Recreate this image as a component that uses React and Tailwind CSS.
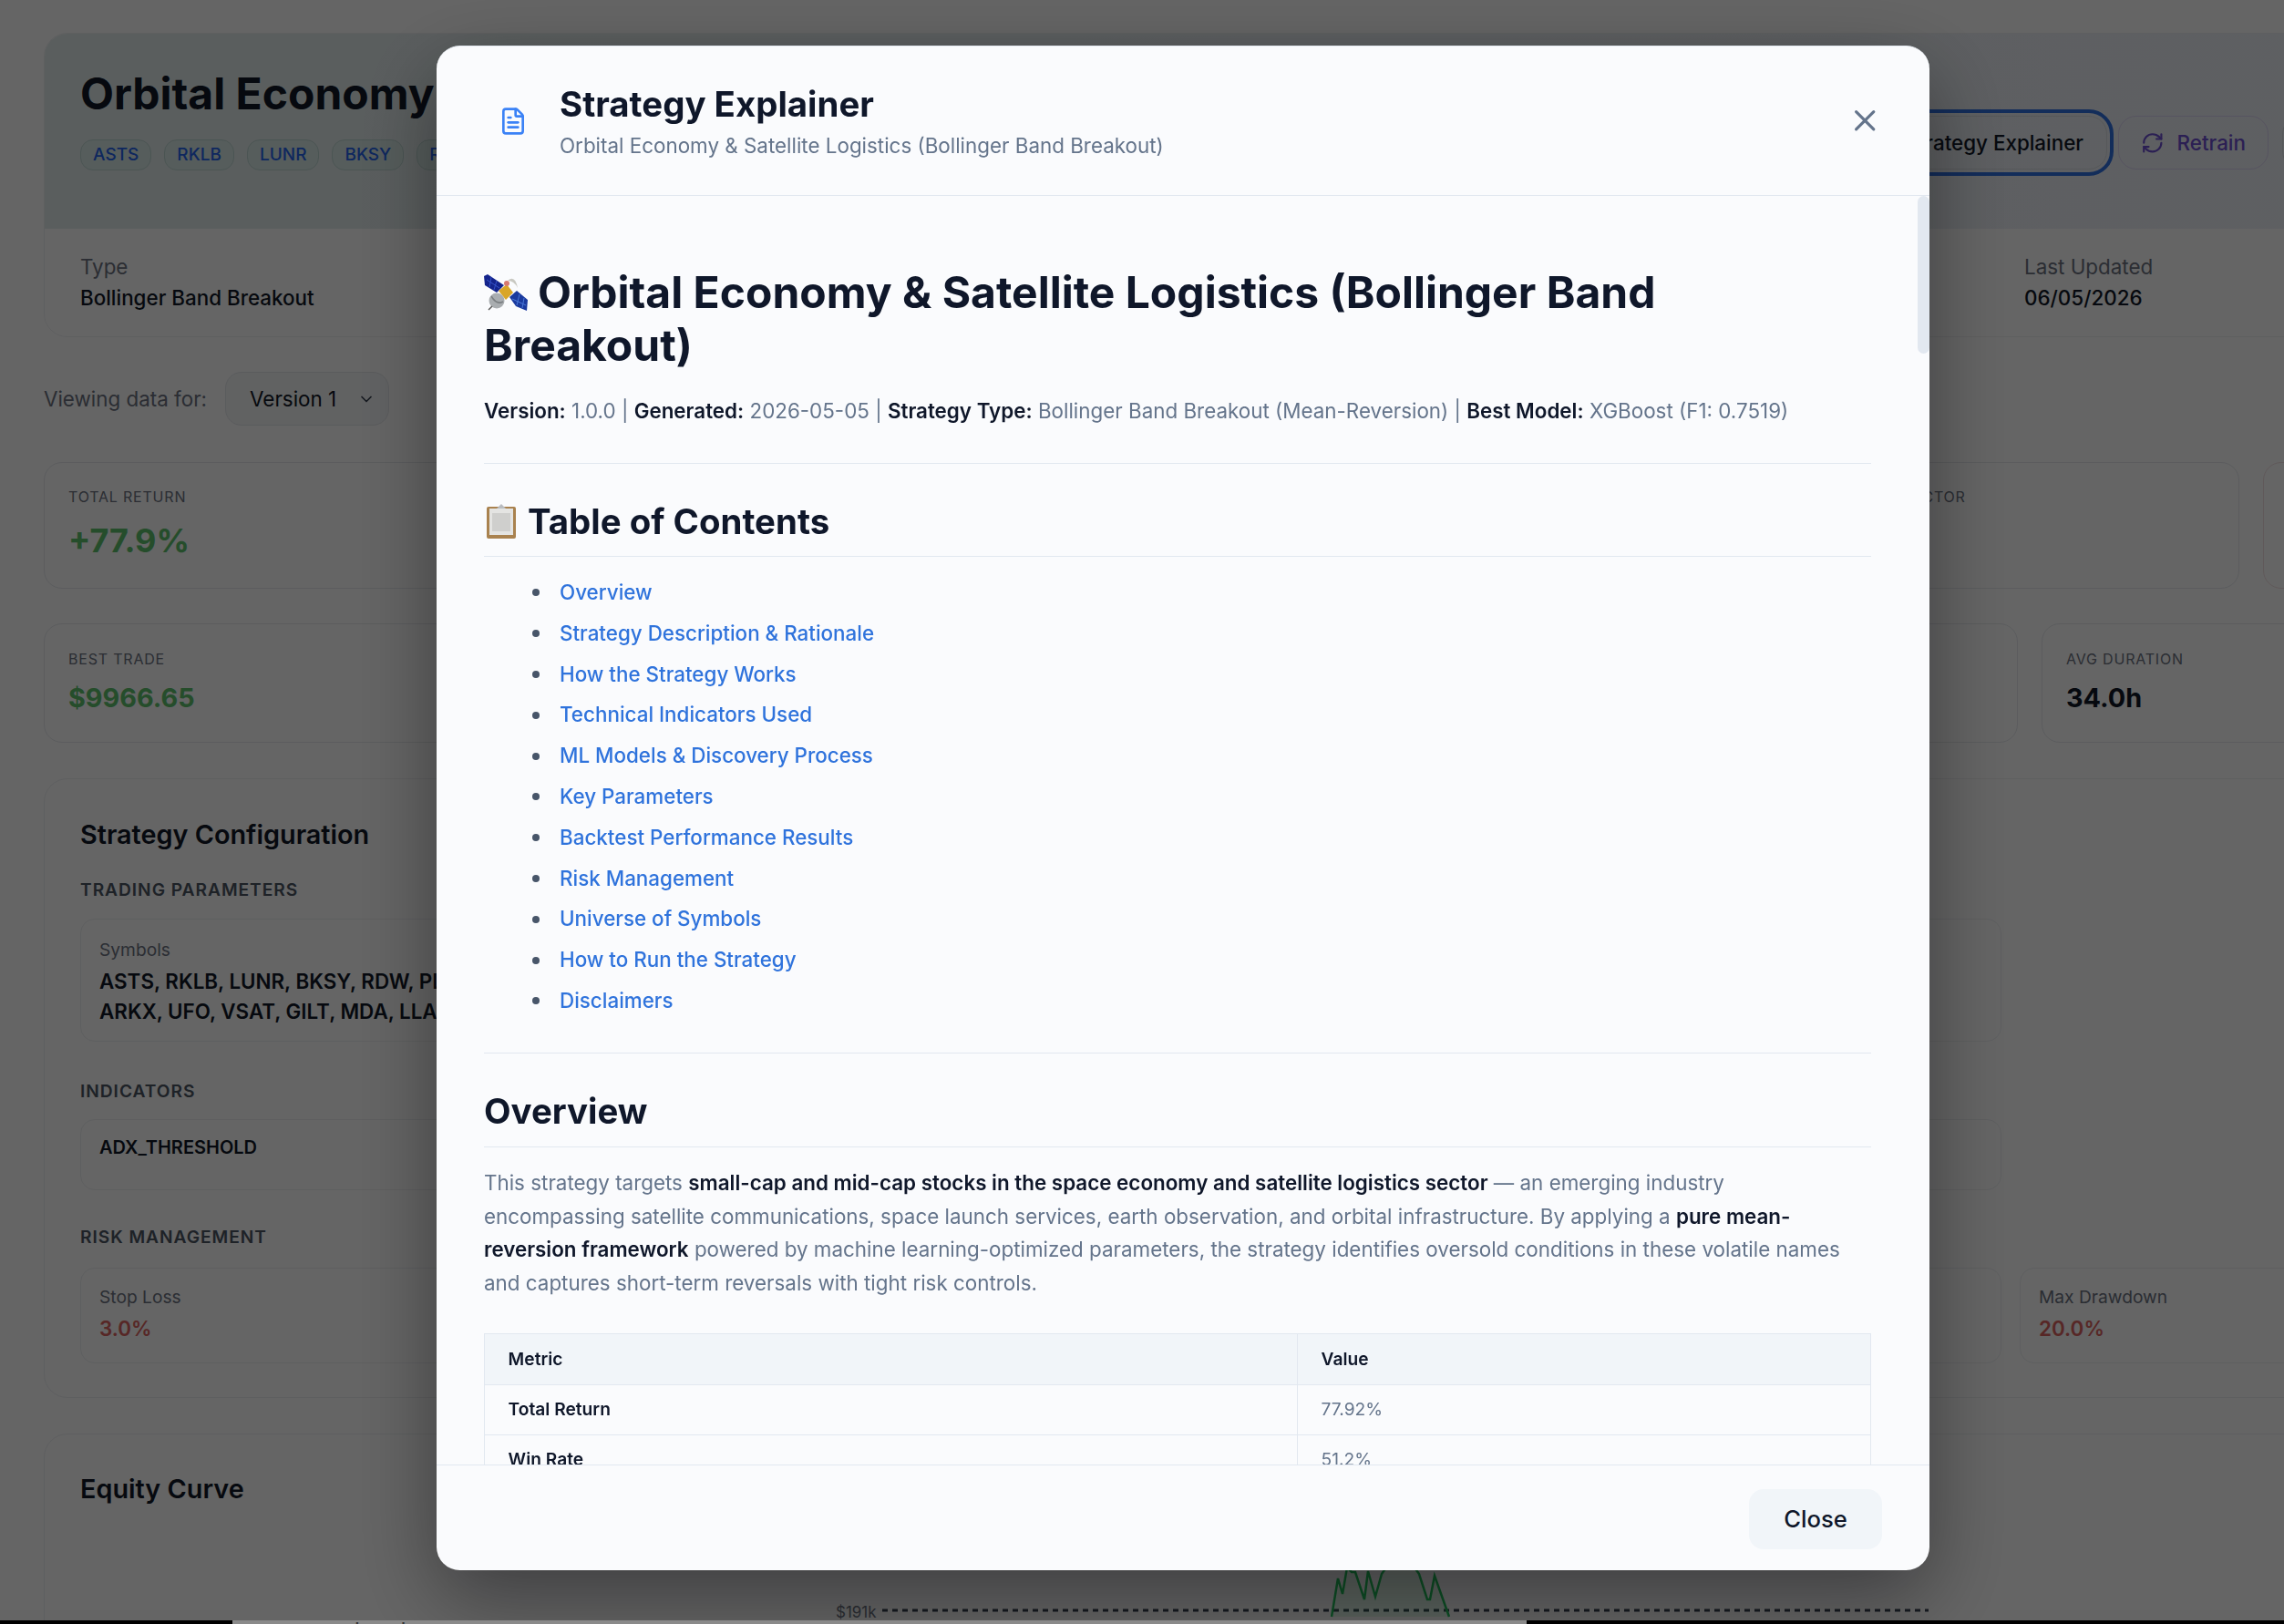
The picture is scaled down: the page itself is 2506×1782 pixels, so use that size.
import React from 'react';
import { ChevronDown, FileText, RefreshCw, X } from 'lucide-react';

const tocItems = [
  'Overview',
  'Strategy Description & Rationale',
  'How the Strategy Works',
  'Technical Indicators Used',
  'ML Models & Discovery Process',
  'Key Parameters',
  'Backtest Performance Results',
  'Risk Management',
  'Universe of Symbols',
  'How to Run the Strategy',
  'Disclaimers',
];

const symbols = ['ASTS', 'RKLB', 'LUNR', 'BKSY', 'RDW'];

const SatelliteEmoji = () => (
  <svg viewBox="0 0 48 40" className="inline-block w-[48px] h-[40px] align-[-3px] mr-[11px]">
    <path d="M0 2 L4 0 L22 12 L14 20 L1 12 Z" fill="#14248c" />
    <path d="M3 6 L17 15 M8 3 L6 14 M14 7 L11 17" stroke="#3552c9" strokeWidth="1" />
    <path d="M28 25 L36 18 L48 28 L47 40 L35 35 Z" fill="#1a3a9e" />
    <path d="M31 27 L46 34 M39 22 L36 34 M44 26 L42 37" stroke="#4a78d8" strokeWidth="1" />
    <path d="M16 18 L25 11 L32 20 L24 28 Z" fill="#d9a628" />
    <circle cx="25" cy="10" r="3" fill="#d77a70" />
    <path d="M26 7 Q34 0 37 15 Q33 7 26 7 Z" fill="#c9c9c2" />
    <circle cx="14" cy="29" r="8.5" fill="#a9adb0" />
    <path d="M8 24 Q14 34 21 30" stroke="#7b7f82" strokeWidth="1.5" fill="none" />
    <path d="M9 35 L5 39" stroke="#555" strokeWidth="1.5" />
  </svg>
);

const ClipboardEmoji = () => (
  <svg viewBox="0 0 32 38" className="inline-block w-[32px] h-[38px] align-[-5px] ml-[3px] mr-[13px]">
    <rect x="0" y="3" width="32" height="35" rx="2" fill="#a9824f" />
    <rect x="3" y="5" width="26" height="29" fill="#e4e4e2" />
    <rect x="6" y="10" width="20" height="20" fill="#cfcfcd" />
    <path d="M11 5 L16 0 L21 5 Z" fill="#b9bcc0" />
  </svg>
);

const StatCard = ({ label, value, tone, className }) => (
  <div className={`rounded-[20px] border border-[#e5e7eb] px-[26px] ${className}`}>
    <div className="text-[16px] tracking-[0.8px] uppercase text-[#6b7280]">{label}</div>
    {value && <div className={`font-bold ${tone}`}>{value}</div>}
  </div>
);

const Background = () => (
  <div className="w-[2650px] ml-[48px] pt-[36px]">
    <div className="rounded-[26px] border border-[#eceef0] overflow-hidden h-[334px]">
      <div className="h-[214px] bg-gradient-to-r from-[#e0eaea] to-[#eceff6] flex justify-between px-[39px]">
        <div className="pt-[37px]">
          <div className="text-[48px] leading-[58px] font-bold text-[#111827] whitespace-nowrap">Orbital Economy &amp; Satellite Logistics</div>
          <div className="flex gap-[14px] mt-[21px]">
            {symbols.map((s) => (
              <span key={s} className="h-[34px] px-[13px] rounded-[14px] border border-[#bcd4d0] bg-[#d6e8e5] text-[19px] leading-[32px] font-medium text-[#2563eb]">{s}</span>
            ))}
          </div>
        </div>
        <div className="flex gap-[12px] items-start pt-[90px]">
          <button className="h-[59px] w-[400px] rounded-[20px] border border-[#d7dbe0] outline-[4px] outline-offset-[3px] outline-[#3070e0] text-right pr-[25px] text-[22.4px] font-medium text-[#111827]">Strategy Explainer</button>
          <button className="h-[59px] w-[165px] rounded-[20px] border border-[#d9d2f0] flex items-center justify-center gap-[14px] text-[22.4px] font-medium text-[#6d4fd0]">
            <RefreshCw size={25.6} className="text-[#6d4fd0]" />
            Retrain
          </button>
          <div className="h-[59px] w-[154px] ml-[3px] rounded-[20px] border border-[#d7dbe0]" />
        </div>
      </div>
      <div className="flex justify-between px-[39px] pt-[25px] bg-[#fcfcfd] h-[120px]">
        <div>
          <div className="text-[22.4px] leading-[34px] text-[#6b7280]">Type</div>
          <div className="text-[22.4px] leading-[34px] font-medium text-[#111827]">Bollinger Band Breakout</div>
        </div>
        <div className="w-[437px]">
          <div className="text-[22.4px] leading-[34px] text-[#6b7280]">Last Updated</div>
          <div className="text-[22.4px] leading-[34px] font-medium text-[#111827]">06/05/2026</div>
        </div>
      </div>
    </div>

    <div className="flex items-center mt-[38px] h-[59px]">
      <span className="text-[22.4px] text-[#6b7280]">Viewing data for:</span>
      <div className="ml-[20px] w-[180px] h-[59px] rounded-[18px] border border-[#e2e5e9] bg-[#f3f4f6] flex items-center justify-between pl-[26px] pr-[14px] text-[22.4px] text-[#111827]">
        Version 1
        <ChevronDown size={20} className="text-[#374151]" />
      </div>
    </div>

    <div className="flex gap-[25.6px] mt-[40px] h-[139px]">
      <StatCard label="Total Return" value="+77.9%" tone="text-[36px] leading-[44px] mt-[14px] text-[#5cc06c]" className="flex-1 pt-[25px]" />
      <StatCard label="Profit Factor" className="w-[462px] pt-[25px]" />
      <StatCard label="" className="w-[215px] border-[#f0dfe0]" />
    </div>

    <div className="flex gap-[25.6px] mt-[38px] h-[131px]">
      <StatCard label="Best Trade" value="$9966.65" tone="text-[28.8px] leading-[40px] mt-[11px] text-[#5cc06c]" className="flex-1 pt-[26px]" />
      <StatCard label="Avg Duration" value="34.0h" tone="text-[28.8px] leading-[40px] mt-[11px] text-[#111827]" className="w-[458px] pt-[26px]" />
    </div>

    <div className="mt-[39px] h-[680px] rounded-[26px] border border-[#eceef0] px-[39px] pt-[41px]">
      <div className="text-[28.8px] leading-[40px] font-semibold text-[#111827]">Strategy Configuration</div>
      <div className="mt-[26px] text-[19.2px] leading-[28px] font-semibold tracking-[0.96px] text-[#4b5563]">TRADING PARAMETERS</div>
      <div className="mt-[18px] w-[2108px] h-[135px] rounded-[16px] border border-[#eceef0] px-[20px] pt-[20px]">
        <div className="text-[19.2px] leading-[26px] text-[#6b7280]">Symbols</div>
        <div className="text-[22.4px] leading-[32.5px] font-semibold text-[#111827] mt-[6px]">
          ASTS, RKLB, LUNR, BKSY, RDW, PL,<br />ARKX, UFO, VSAT, GILT, MDA, LLAP
        </div>
      </div>
      <div className="mt-[40px] text-[19.2px] leading-[28px] font-semibold tracking-[0.96px] text-[#4b5563]">INDICATORS</div>
      <div className="mt-[17px] w-[2108px] h-[78px] rounded-[16px] border border-[#eceef0] px-[20px] pt-[16px]">
        <div className="text-[20px] leading-[28px] font-semibold text-[#111827]">ADX_THRESHOLD</div>
      </div>
      <div className="mt-[37px] text-[19.2px] leading-[28px] font-semibold tracking-[0.96px] text-[#4b5563]">RISK MANAGEMENT</div>
      <div className="mt-[20px] flex gap-[20px] h-[105px]">
        <div className="w-[2108px] shrink-0 rounded-[16px] border border-[#eceef0] px-[20px] pt-[18px]">
          <div className="text-[19.2px] leading-[26px] text-[#6b7280]">Stop Loss</div>
          <div className="text-[22.4px] leading-[34px] font-semibold text-[#d9625f] mt-[5px]">3.0%</div>
        </div>
        <div className="w-[400px] rounded-[16px] border border-[#eceef0] px-[20px] pt-[18px]">
          <div className="text-[19.2px] leading-[26px] text-[#6b7280]">Max Drawdown</div>
          <div className="text-[22.4px] leading-[34px] font-semibold text-[#d9625f] mt-[5px]">20.0%</div>
        </div>
      </div>
    </div>

    <div className="mt-[39px] h-[400px] rounded-[26px] border border-[#eceef0] pl-[39px] pt-[40px]">
      <div className="text-[28.8px] leading-[40px] font-semibold text-[#111827]">Equity Curve</div>
      <svg width="2200" height="126" viewBox="0 0 2200 126" className="mt-[15px] block">
        <text x="829" y="106" fontSize="17" fill="#6b7280" fontFamily="Inter">$191k</text>
        <path d="M880 98 H2028" stroke="#374151" strokeWidth="3" strokeDasharray="6 5" fill="none" />
        <path d="M1373 105 L1380 63 L1385 80 L1390 51 L1395 56 L1399 56 L1409 86 L1413 55 L1421 83 L1428 58 L1433 51 L1464 51 L1469 58 L1478 86 L1481 86 L1486 60 L1502 105 Z" fill="#22c55e" fillOpacity="0.12" />
        <path d="M1373 105 L1380 63 L1385 80 L1390 51 L1395 56 L1399 56 L1409 86 L1413 55 L1421 83 L1428 58 L1433 51 L1464 51 L1469 58 L1478 86 L1481 86 L1486 60 L1502 105" fill="none" stroke="#22c55e" strokeWidth="2.5" />
      </svg>
    </div>
  </div>
);

const ExplainerModal = () => (
  <div className="absolute inset-0 bg-black/60 backdrop-blur-[0.5px] pl-[479px] pt-[50px]">
    <div className="w-[1638px] h-[1673px] rounded-[25.6px] bg-[#fafbfd] border-t border-[#e6ebf2] shadow-[0_30px_90px_rgba(0,0,0,0.4)] flex flex-col overflow-hidden relative">
      <div className="h-[164px] shrink-0 border-b border-[#e2e8f0] flex items-center pl-[68px] pr-[52px]">
        <FileText size={32} className="text-[#3b82f6]" />
        <div className="ml-[35px] flex-1">
          <div className="text-[38.4px] leading-[48px] font-bold text-[#0f172a]">Strategy Explainer</div>
          <div className="mt-[6px] text-[22.4px] leading-[32px] text-[#64748b]">Orbital Economy &amp; Satellite Logistics (Bollinger Band Breakout)</div>
        </div>
        <X size={38.4} className="text-[#64748b]" />
      </div>

      <div className="flex-1 overflow-hidden relative pl-[52px] pr-[64px] pt-[77px]">
        <h1 className="text-[48px] leading-[57.6px] font-bold text-[#0f172a]">
          <SatelliteEmoji />Orbital Economy &amp; Satellite Logistics (Bollinger Band Breakout)
        </h1>
        <p className="mt-[26px] text-[22.4px] leading-[36.4px] text-[#64748b]">
          <strong className="font-semibold text-[#0f172a]">Version:</strong> 1.0.0 | <strong className="font-semibold text-[#0f172a]">Generated:</strong> 2026-05-05 | <strong className="font-semibold text-[#0f172a]">Strategy Type:</strong> Bollinger Band Breakout (Mean-Reversion) | <strong className="font-semibold text-[#0f172a]">Best Model:</strong> XGBoost (F1: 0.7519)
        </p>
        <hr className="mt-[38px] border-[#e2e8f0]" />
        <h2 className="mt-[40px] pb-[15px] border-b border-[#e2e8f0] text-[38.4px] leading-[46px] font-bold text-[#0f172a]">
          <ClipboardEmoji />Table of Contents
        </h2>
        <ul className="mt-[17.5px] pl-[53px] text-[22.4px] leading-[44.8px]">
          {tocItems.map((item) => (
            <li key={item} className="flex items-center text-[#2f73dc] font-medium">
              <span className="w-[8px] h-[8px] rounded-full bg-[#475569] mr-[22px]" />
              {item}
            </li>
          ))}
        </ul>
        <hr className="mt-[34.5px] border-[#e2e8f0]" />
        <h2 className="mt-[40px] pb-[16px] border-b border-[#e2e8f0] text-[38.4px] leading-[46px] font-bold text-[#0f172a]">Overview</h2>
        <p className="mt-[21px] pr-[8px] text-[22.4px] leading-[36.5px] text-[#64748b]">
          This strategy targets <strong className="font-semibold text-[#0f172a]">small-cap and mid-cap stocks in the space economy and satellite logistics sector</strong> — an emerging industry encompassing satellite communications, space launch services, earth observation, and orbital infrastructure. By applying a <strong className="font-semibold text-[#0f172a]">pure mean-reversion framework</strong> powered by machine learning-optimized parameters, the strategy identifies oversold conditions in these volatile names and captures short-term reversals with tight risk controls.
        </p>
        <table className="mt-[36.5px] w-full border-collapse text-[19.2px] table-fixed">
          <thead>
            <tr className="h-[56px] bg-[#f1f5f9]">
              <th className="w-[892px] border border-[#e2e8f0] pl-[25.6px] text-left font-semibold text-[#0f172a]">Metric</th>
              <th className="border border-[#e2e8f0] pl-[25.6px] text-left font-semibold text-[#0f172a]">Value</th>
            </tr>
          </thead>
          <tbody>
            <tr className="h-[55px]">
              <td className="border border-[#e2e8f0] pl-[25.6px] font-semibold text-[#0f172a]">Total Return</td>
              <td className="border border-[#e2e8f0] pl-[25.6px] text-[#64748b]">77.92%</td>
            </tr>
            <tr className="h-[55px]">
              <td className="border border-[#e2e8f0] pl-[25.6px] font-semibold text-[#0f172a]">Win Rate</td>
              <td className="border border-[#e2e8f0] pl-[25.6px] text-[#64748b]">51.2%</td>
            </tr>
          </tbody>
        </table>
        <div className="absolute top-0 right-0 w-[12.8px] h-[173px] rounded-full bg-[#e2e8f0]" />
      </div>

      <div className="h-[116px] shrink-0 border-t border-[#e2e8f0] flex justify-end pt-[26px] pr-[52px]">
        <button className="w-[146px] h-[66px] rounded-[16px] bg-[#f1f5f9] text-[25.6px] font-medium text-[#0f172a]">Close</button>
      </div>
    </div>
  </div>
);

export default function App() {
  return (
    <div className="h-screen overflow-hidden flex flex-col bg-black font-['Inter',sans-serif]">
      <div className="h-[1778px] shrink-0 relative overflow-hidden bg-[#fcfcfd]">
        <Background />
        <ExplainerModal />
      </div>
      <div className="h-[4px] flex overflow-hidden">
        <div className="w-[255px] bg-black" />
        <div className="w-[1420px] bg-[#8a8a8a] pl-[90px] text-[24px] leading-[24px] text-[#333]">trackpad</div>
        <div className="flex-1 bg-black" />
      </div>
    </div>
  );
}
